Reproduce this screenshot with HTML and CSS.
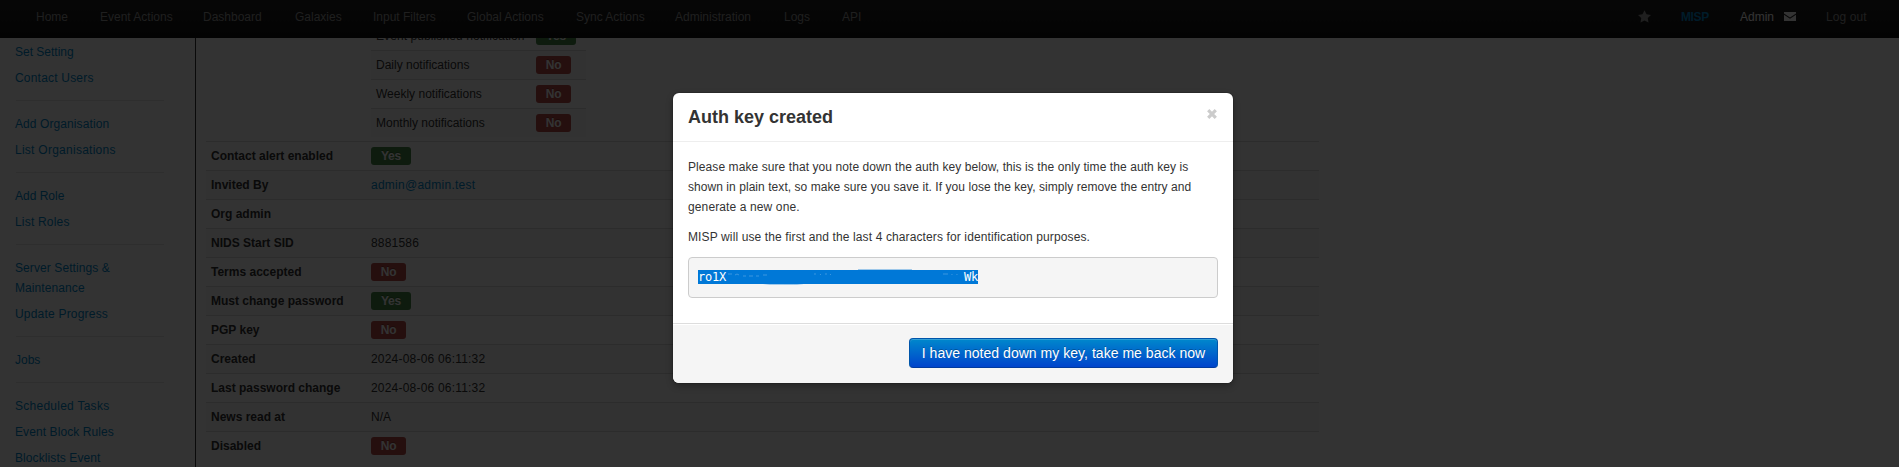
FILE: index.html
```html
<!DOCTYPE html>
<html lang="en">
<head>
<meta charset="utf-8">
<title>MISP - Auth key created</title>
<link rel="stylesheet" href="styles.css">
</head>
<body>
<nav class="topbar">
  <div class="menu">
    <a class="w64">Home</a><a class="w103">Event Actions</a><a class="w92">Dashboard</a><a class="w78">Galaxies</a><a class="w94">Input Filters</a><a class="w109">Global Actions</a><a class="w99">Sync Actions</a><a class="w109">Administration</a><a class="w58">Logs</a><a>API</a>
  </div>
  <div class="menu user">
    <a class="w43"><svg class="star" viewBox="0 0 26 25"><path d="M13 0l4 8 9 1.300-6.500 6.300 1.500 9.100-8-4.300-8 4.300 1.500-9.100L0 9.300 9 8z"/></svg></a><a class="w59 brand">MISP</a><a class="w86 bright">Admin<svg class="mail" viewBox="0 0 12 9"><path d="M0 0h12v1.500L6 5.500 0 1.500zM0 2.700l6 4 6-4V9H0z"/></svg></a><a class="ls1">Log out</a>
  </div>
</nav>
<div class="page">
  <aside class="side">
    <a>Set Setting</a><a class="ls2">Contact Users</a><hr>
    <a class="ls1">Add Organisation</a><a class="ls3">List Organisations</a><hr>
    <a>Add Role</a><a class="ls2">List Roles</a><hr>
    <a class="ls1">Server Settings &amp;<br>Maintenance</a><a class="ls2">Update Progress</a><hr>
    <a>Jobs</a><hr>
    <a class="ls3">Scheduled Tasks</a><a class="ls1">Event Block Rules</a><a class="ls1">Blocklists Event</a>
  </aside>
  <main class="details">
    <div class="inner">
      <div class="irow"><span class="ls1">Event published notification</span><b class="tag yes">Yes</b></div>
      <div class="irow odd"><span>Daily notifications</span><b class="tag no">No</b></div>
      <div class="irow"><span>Weekly notifications</span><b class="tag no">No</b></div>
      <div class="irow odd"><span>Monthly notifications</span><b class="tag no">No</b></div>
    </div>
    <div class="row"><b class="key">Contact alert enabled</b><b class="tag yes">Yes</b></div>
    <div class="row odd"><b class="key">Invited By</b><a class="ls3">admin@admin.test</a></div>
    <div class="row"><b class="key">Org admin</b></div>
    <div class="row odd"><b class="key">NIDS Start SID</b><span class="ls2">8881586</span></div>
    <div class="row"><b class="key">Terms accepted</b><b class="tag no">No</b></div>
    <div class="row odd"><b class="key">Must change password</b><b class="tag yes">Yes</b></div>
    <div class="row"><b class="key">PGP key</b><b class="tag no">No</b></div>
    <div class="row odd"><b class="key">Created</b><span class="ls2">2024-08-06 06:11:32</span></div>
    <div class="row"><b class="key">Last password change</b><span class="ls2">2024-08-06 06:11:32</span></div>
    <div class="row odd"><b class="key">News read at</b><span>N/A</span></div>
    <div class="row"><b class="key">Disabled</b><b class="tag no">No</b></div>
  </main>
</div>
<div class="backdrop"></div>
<section class="modal">
  <header class="mhead"><h3>Auth key created</h3><svg class="close" viewBox="0 0 10 10"><path d="M1.200 1.200l7.600 7.600M8.800 1.200l-7.600 7.600"/></svg></header>
  <div class="mbody">
    <p><span class="l1">Please make sure that you note down the auth key below, this is the only time the auth key is</span><br><span class="l2">shown in plain text, so make sure you save it. If you lose the key, simply remove the entry and</span><br><span class="l3">generate a new one.</span></p>
    <p><span class="l3">MISP will use the first and the last 4 characters for identification purposes.</span></p>
    <div class="keybox"><code class="sel"><span>ro1X</span><svg class="smudge" viewBox="0 0 238 18"><path class="blot" d="M37 15.500q20 2 41 0v.5q-20 2-41 0zM132 1.500h54v.5h-54z"/><path class="rest" d="M2 6h4M9 7l2-1 2 1M17 8h3M23 8h4M30 8h3M37 7h4M88 6h2M94 6l1 1M99 6h2M104 6l1 1M217 6h5M226 6v1M231 6v1"/></svg><span>Wk</span></code></div>
  </div>
  <footer class="mfoot"><button class="btn">I have noted down my key, take me back now</button></footer>
</section>
</body>
</html>
```
FILE: styles.css
```css
* { box-sizing: border-box; }
body { margin: 0; height: 467px; overflow: hidden; background: #fff; color: #333; font: 12px/20px "Liberation Sans", Arial, sans-serif; }
a { color: #08c; white-space: nowrap; }
.topbar { position: relative; z-index: 1; height: 38px; padding: 0 0 0 36px; display: flex; justify-content: space-between; background: linear-gradient(#222, #111); }
.menu { display: flex; padding-top: 7px; }
.user { width: 261px; }
.menu a { color: #999; }
.menu .brand { color: #08c; font-weight: bold; letter-spacing: -.4px; }
.menu .bright { color: #fff; }
.w43 { width: 43px; } .w58 { width: 58px; } .w59 { width: 59px; } .w64 { width: 64px; } .w78 { width: 78px; } .w86 { width: 86px; }
.w92 { width: 92px; } .w94 { width: 94px; } .w99 { width: 99px; } .w103 { width: 103px; } .w109 { width: 109px; }
.ls1 { letter-spacing: .09px; } .ls2 { letter-spacing: .2px; } .ls3 { letter-spacing: .26px; }
.star { width: 13px; height: 13px; fill: #999; vertical-align: -2px; }
.mail { width: 12px; height: 9px; fill: #fff; margin-left: 10px; vertical-align: 0; }
.page { display: flex; height: 429px; }
.side { width: 196px; padding: 1px 0 0 15px; border-right: 1px solid #333; }
.side a { display: block; padding: 3px 0; }
.side hr { width: 148px; height: 1px; margin: 9px 0 10px 1px; border: 0; background: #e5e5e5; }
.details { width: 1123px; padding-left: 10px; }
.inner { width: 215px; height: 120px; margin: -17px 0 0 165px; }
.irow { display: flex; align-items: center; height: 29px; padding-left: 5px; border-top: 1px solid #ddd; }
.irow span { width: 160px; }
.odd { background: #f9f9f9; }
.row { display: flex; align-items: center; height: 29px; padding-left: 5px; border-top: 1px solid #ddd; }
.key { width: 160px; }
.tag { height: 18px; border-radius: 3px; color: #fff; line-height: 18px; text-align: center; text-shadow: 0 -1px 0 rgba(0,0,0,.25); }
.yes { width: 40px; background: #468847; letter-spacing: -.2px; }
.no { width: 35px; background: #b94a48; letter-spacing: -.2px; }
.backdrop { position: absolute; inset: 0; z-index: 2; background: rgba(0,0,0,.8); }
.modal { position: absolute; z-index: 3; left: 673px; top: 93px; width: 560px; height: 290px; border-radius: 6px; background: #fff; box-shadow: 0 3px 7px rgba(0,0,0,.3), 0 0 0 1px rgba(0,0,0,.1); overflow: hidden; }
.mhead { display: flex; justify-content: space-between; height: 49px; padding: 9px 16px 0 15px; border-bottom: 1px solid #eee; }
h3 { margin: 0; font-size: 18px; line-height: 30px; }
.close { width: 10px; height: 10px; margin-top: 7px; fill: none; stroke: #ccc; stroke-width: 3.2; overflow: visible; }
.mbody { height: 181px; padding: 15px; }
p { margin: 0 0 10px; white-space: nowrap; }
.l1 { letter-spacing: .08px; } .l2 { letter-spacing: .055px; } .l3 { letter-spacing: .12px; }
.keybox { height: 41px; padding: 12px 9px; border: 1px solid #ccc; border-radius: 4px; background: #f5f5f5; }
.sel { display: flex; width: 280px; height: 14px; background: #0078d7; color: #fff; font: 12px/14px "DejaVu Sans Mono", monospace; letter-spacing: -.22px; }
.smudge { width: 238px; height: 18px; margin-top: -2px; }
.blot { fill: #0078d7; opacity: .7; }
.rest { fill: none; stroke: #6ab0e8; stroke-width: .7; opacity: .8; }
.mfoot { display: flex; justify-content: flex-end; height: 60px; padding: 14px 15px; border-top: 1px solid #ddd; background: #f5f5f5; box-shadow: inset 0 1px 0 #fff; }
.btn { width: 309px; height: 30px; padding: 0; border: 1px solid; border-color: #05a #05a #003a9e; border-radius: 4px; color: #fff; font: 14px/20px "Liberation Sans", Arial, sans-serif; letter-spacing: .03px; background: linear-gradient(#08c, #04c); box-shadow: inset 0 1px 0 rgba(255,255,255,.2); text-shadow: 0 -1px 0 rgba(0,0,0,.25); white-space: nowrap; }
```
